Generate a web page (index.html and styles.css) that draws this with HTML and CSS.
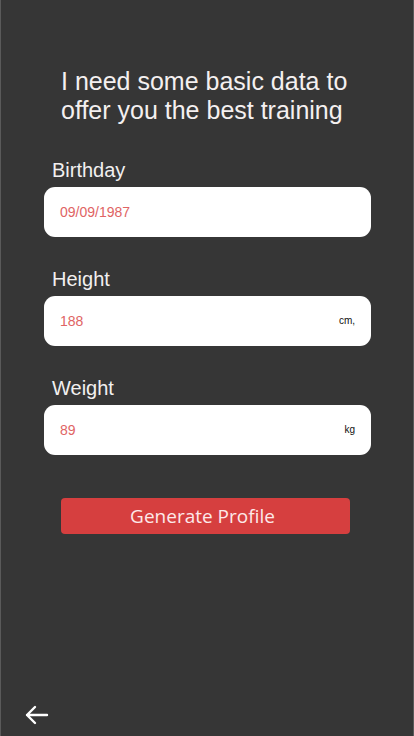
FILE: index.html
```html
<!DOCTYPE html>
<html>
<head>
<meta charset="utf-8">
<link rel="stylesheet" href="styles.css">
</head>
<body>
<div class="screen">
  <h1 class="title">I need some basic data to<br>offer you the best training</h1>
  <div class="form">
    <div class="field">
      <div class="label">Birthday</div>
      <div class="box"><span class="value">09/09/1987</span></div>
    </div>
    <div class="field">
      <div class="label">Height</div>
      <div class="box"><span class="value">188</span><span class="unit">cm,</span></div>
    </div>
    <div class="field">
      <div class="label">Weight</div>
      <div class="box"><span class="value">89</span><span class="unit unit-kg">kg</span></div>
    </div>
  </div>
  <div class="btn-row"><div class="btn">Generate Profile</div></div>
  <div class="spacer"></div>
  <div class="footer">
    <svg class="back" width="26" height="22" viewBox="0 0 26 22"><path d="M24 11H4M12 3L4 11L12 19" fill="none" stroke="#fff" stroke-width="2.4" stroke-linecap="round" stroke-linejoin="round"/></svg>
  </div>
</div>
</body>
</html>
```
FILE: styles.css
```css
html, body { margin: 0; padding: 0; }
body { background: #363636; font-family: "Liberation Sans", Arial, sans-serif; }
.screen {
  width: 414px; height: 736px; box-sizing: border-box;
  background: #363636;
  border-left: 1px solid #5a5a5a; border-right: 1px solid #5a5a5a;
  display: flex; flex-direction: column;
}
.title {
  margin: 67px 0 0 60px; font-weight: normal; font-size: 25px; line-height: 29px;
  color: #f4f0f0;
}
.form { display: flex; flex-direction: column; gap: 30px; margin-top: 33px; }
.field { display: flex; flex-direction: column; }
.label { margin-left: 51px; color: #f2f0f0; font-size: 20px; line-height: 24px; height: 24px; }
.box {
  margin: 5px 0 0 43px; width: 327px; height: 50px; box-sizing: border-box;
  background: #fff; border-radius: 11px;
  display: flex; align-items: center; padding: 0 16px;
}
.value { color: #e06464; font-size: 14px; flex: 1; margin-top: -1px; }
.unit { color: #111; font-size: 10px; margin-right: 0; margin-top: -2px; }
.unit-kg { margin-right: 0; }
.btn-row { margin-top: 43px; padding-left: 60px; }
.btn {
  width: 289px; height: 36px; box-sizing: border-box; padding-right: 6px;
  background: #d63f3f; border-radius: 4px;
  color: #fde9e9; font-family: "Open Sans", sans-serif; font-size: 19px;
  display: flex; align-items: center; justify-content: center;
}
.spacer { flex: 1; }
.footer { padding: 0 0 10px 22px; }
.back { display: block; }
```
